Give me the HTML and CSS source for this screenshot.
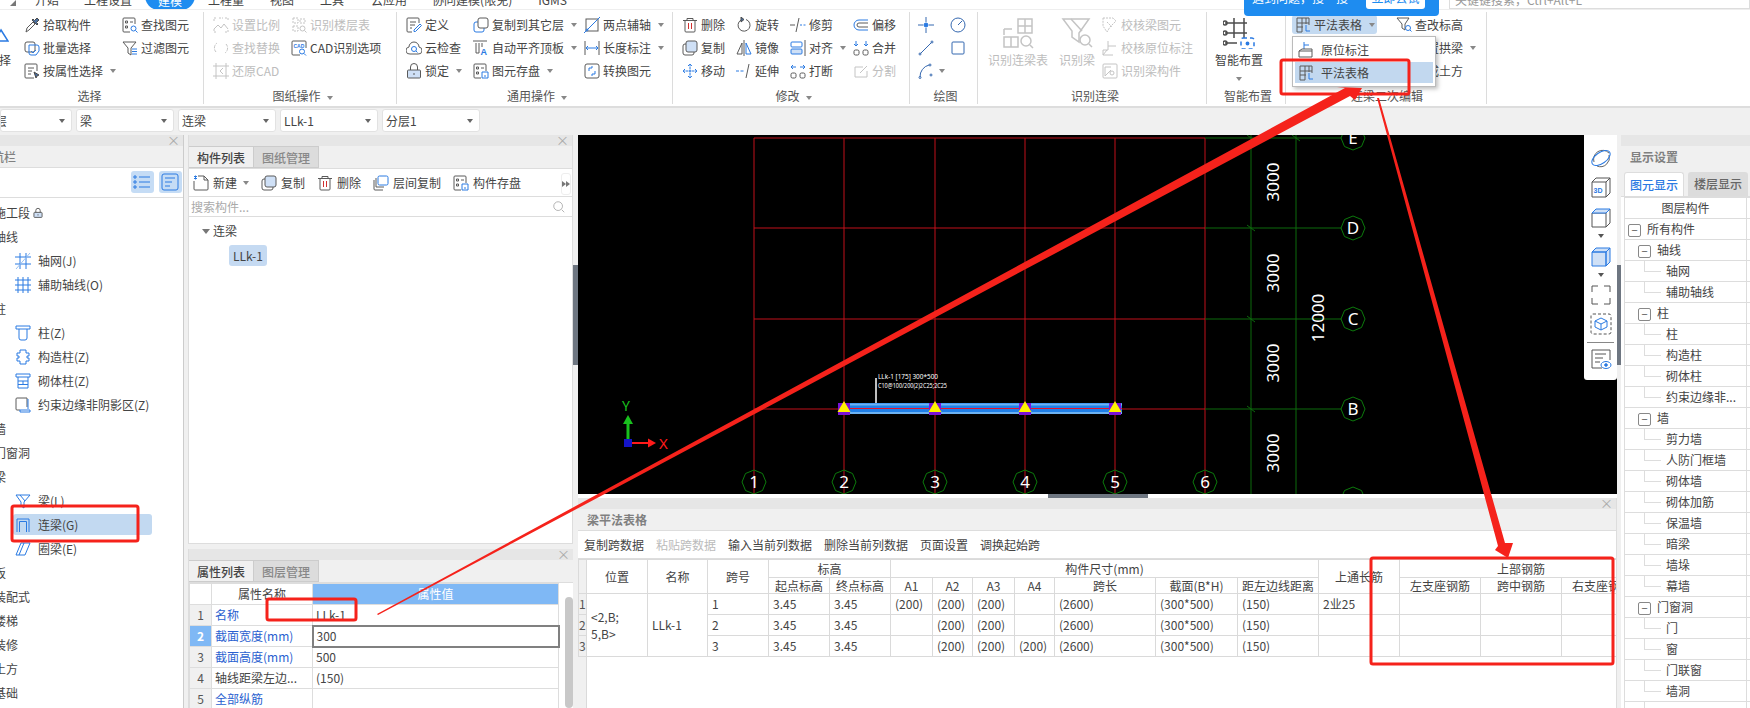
FILE: index.html
```html
<!DOCTYPE html>
<html lang="zh">
<head>
<meta charset="utf-8">
<title>梁平法表格</title>
<link rel="stylesheet" href="styles.css">
</head>
<body>
<svg class="defs" aria-hidden="true">
<defs>
<symbol id="i-pick" viewBox="0 0 16 16"><path d="M2 15l1-4 6-6 2 2-6 6z"/><path class="af" d="M8 3l5 5 1-1-1.500-1.500L15 3l-2-2-2.500 2.500L9 2z"/></symbol>
<symbol id="i-batch" viewBox="0 0 16 16"><rect x="1" y="2" width="10" height="10" rx="2"/><path class="a" d="M5 5h8a2 2 0 0 1 2 2v4l-3 4H7a2 2 0 0 1-2-2z"/><path class="a" d="M7 11l2 2 3-3"/></symbol>
<symbol id="i-attr" viewBox="0 0 16 16"><path d="M10 15H2a1 1 0 0 1-1-1V2a1 1 0 0 1 1-1h10a1 1 0 0 1 1 1v6"/><path d="M4 5h6M4 8h4M4 11h3"/><path class="af" d="M10 9l5 3-2 1-1 2z"/></symbol>
<symbol id="i-find" viewBox="0 0 16 16"><path d="M8 15H2a1 1 0 0 1-1-1V2a1 1 0 0 1 1-1h10a1 1 0 0 1 1 1v5"/><path d="M3.500 4h2v2h-2zM8 5h3M3.500 9h2v2h-2z"/><circle class="a" cx="11.500" cy="11.500" r="2.500"/><path class="a" d="M13.500 13.500l2 2"/></symbol>
<symbol id="i-filter" viewBox="0 0 16 16"><path d="M1 2h13l-5 6v7l-3-2V8z"/><path class="a" d="M10 9h5M10 11.500h5M10 14h5"/></symbol>
<symbol id="i-scale" viewBox="0 0 16 16"><path d="M1 4V1h3M12 1h3v3M1 12v3h3M12 15h3v-3M6 1h4" stroke-dasharray="2 1"/><path d="M1 12l4-4 3 3 3-4 4 5"/></symbol>
<symbol id="i-floor" viewBox="0 0 16 16"><path d="M2 1h5v5H2zM2 9h5v5H2zM9 2h5v4H9z" stroke-dasharray="2 1"/><circle cx="11.500" cy="11.500" r="2.500"/><path d="M13.500 13.500l2 2"/></symbol>
<symbol id="i-replace" viewBox="0 0 16 16"><path d="M3 12a6 6 0 0 1 1-9M13 4a6 6 0 0 1-1 9" stroke-dasharray="3 1"/></symbol>
<symbol id="i-cad" viewBox="0 0 16 16"><path d="M9 15H2a1 1 0 0 1-1-1V2a1 1 0 0 1 1-1h12a1 1 0 0 1 1 1v6"/><text x="2.500" y="7.500" class="tiny">CAD</text><circle class="a" cx="11" cy="11.500" r="2.500"/><path class="a" d="M13 13.500l2 2"/></symbol>
<symbol id="i-restore" viewBox="0 0 16 16"><path d="M3 0v16M13 0v16M0 3h16M0 13h16"/><path d="M10 5L7 8l3 3"/></symbol>
<symbol id="i-def" viewBox="0 0 16 16"><path d="M13 6V2a1 1 0 0 0-1-1H2a1 1 0 0 0-1 1v12a1 1 0 0 0 1 1h4"/><path d="M4 5h6M4 8h5M4 11h2"/><path class="a" d="M8 13l6-6 1.500 1.500-6 6H8z"/></symbol>
<symbol id="i-cloud" viewBox="0 0 16 16"><path d="M4 14a3.500 3.500 0 0 1-1-7 5 5 0 0 1 10 0 3.500 3.500 0 0 1-1 7z"/><circle class="a" cx="8" cy="9" r="2.500"/><path class="a" d="M10 11l1.500 1.500"/></symbol>
<symbol id="i-lock" viewBox="0 0 16 16"><rect class="lf" x="1.500" y="7" width="13" height="8" rx="1"/><path d="M4.500 7V4a3.500 3.500 0 0 1 7 0v3"/><path d="M8 10v2"/></symbol>
<symbol id="i-copy2" viewBox="0 0 16 16"><rect class="a" x="1" y="5" width="10" height="10" rx="2"/><rect x="5" y="1" width="10" height="10" rx="2" fill="#fff"/></symbol>
<symbol id="i-align" viewBox="0 0 16 16"><path d="M0 1h14M3 3v10h3V3M9 3v4"/><text x="7.500" y="15" class="tinyb">A</text></symbol>
<symbol id="i-save" viewBox="0 0 16 16"><path d="M8 15H2a1 1 0 0 1-1-1V2a1 1 0 0 1 1-1h10a1 1 0 0 1 1 1v6"/><path d="M3.500 4h2v2h-2zM8 5h3M3.500 9h2v2h-2z"/><path class="a" d="M9 9h6v6H9zM11 13h2"/></symbol>
<symbol id="i-two" viewBox="0 0 16 16"><rect x="2" y="2" width="12" height="12"/><path class="a" d="M0 16L16 0"/><circle class="a" cx="3" cy="13" r="1"/></symbol>
<symbol id="i-dim" viewBox="0 0 16 16"><path d="M1 1v14M15 1v14"/><path class="a" d="M2 8h12M4 6L2 8l2 2M12 6l2 2-2 2"/></symbol>
<symbol id="i-conv" viewBox="0 0 16 16"><rect x="1" y="1" width="14" height="14" rx="2"/><path class="a" d="M5 8V5h3M11 8v3H8M8 3v2M8 13v-2"/></symbol>
<symbol id="i-del" viewBox="0 0 16 16"><path d="M1 3.500h14M5 3V1.500h6V3M3 4v10a1 1 0 0 0 1 1h8a1 1 0 0 0 1-1V4"/><path class="r" d="M6.500 6v6M9.500 6v6"/></symbol>
<symbol id="i-rot" viewBox="0 0 16 16"><path d="M5 3a6 6 0 1 0 5-.5"/><path class="af" d="M5 0v5l3-2.500z"/></symbol>
<symbol id="i-trim" viewBox="0 0 16 16"><path d="M6 15L9 1"/><path d="M0 8h5"/><path class="a" d="M10 8h6" stroke-dasharray="2 1.500"/></symbol>
<symbol id="i-off" viewBox="0 0 16 16"><path class="a" d="M15 3H6a5 5 0 0 0 0 10h9"/><path d="M15 6H6a2 2 0 0 0 0 4h9"/></symbol>
<symbol id="i-copy" viewBox="0 0 16 16"><rect x="1" y="4" width="11" height="11" rx="2"/><rect class="lf" x="4" y="1" width="11" height="11" rx="2"/></symbol>
<symbol id="i-mir" viewBox="0 0 16 16"><path d="M8 0v16"/><path d="M6 3L1 14h5z"/><path class="a" d="M10 3l5 11h-5z"/></symbol>
<symbol id="i-al2" viewBox="0 0 16 16"><rect class="a" x="1" y="2" width="11" height="5" rx="1"/><rect class="alf" x="1" y="9" width="11" height="5" rx="1"/><path d="M15 0v16"/></symbol>
<symbol id="i-mrg" viewBox="0 0 16 16"><rect x="1" y="10" width="5" height="5" rx="1.500"/><rect x="10" y="10" width="5" height="5" rx="1.500"/><path class="a" d="M3 1v5M13 1v5M5 4h0M11 4h0M1 4l2 2 2-2M11 4l2 2 2-2"/></symbol>
<symbol id="i-mov" viewBox="0 0 16 16"><path class="a" d="M8 1v14M1 8h14M6 3l2-2 2 2M6 13l2 2 2-2M3 6L1 8l2 2M13 6l2 2-2 2" stroke-dasharray="2.500 .5"/></symbol>
<symbol id="i-ext" viewBox="0 0 16 16"><path d="M10 15l3-14"/><path class="a" d="M0 8h9" stroke-dasharray="3 1.500"/></symbol>
<symbol id="i-brk" viewBox="0 0 16 16"><rect x="1" y="10" width="5" height="5" rx="1.500"/><rect x="10" y="10" width="5" height="5" rx="1.500"/><path class="a" d="M1 4h5M10 4h5M3 2L1 4l2 2M13 2l2 2-2 2"/></symbol>
<symbol id="i-split" viewBox="0 0 16 16"><path d="M14 8v6H2V4h8"/><path d="M7 10l7-7"/></symbol>
<symbol id="i-pt" viewBox="0 0 16 16"><path class="c" d="M8 0v5M8 11v5M0 8h5M11 8h5"/><circle class="cf" cx="8" cy="8" r="2"/></symbol>
<symbol id="i-cir" viewBox="0 0 16 16"><circle class="c" cx="8" cy="8" r="7"/><path class="c" d="M8 8l4-4"/></symbol>
<symbol id="i-line" viewBox="0 0 16 16"><path class="c" d="M2.500 13.500l11-11"/><circle class="c" cx="2" cy="14" r="1"/><circle class="c" cx="14" cy="2" r="1"/></symbol>
<symbol id="i-rect" viewBox="0 0 16 16"><rect class="c" x="2" y="2" width="12" height="12" rx="1"/></symbol>
<symbol id="i-arc" viewBox="0 0 16 16"><path class="c" d="M2 14A12 12 0 0 1 11 2"/><circle class="c" cx="2" cy="14.500" r="1"/><circle class="c" cx="12" cy="2" r="1"/><circle class="c" cx="13" cy="12" r="1"/></symbol>
<symbol id="i-recog" viewBox="0 0 32 32"><path d="M2 12h8M2 12v6M16 2h14v14H16zM23 2v14M16 9h14M2 20h14v10H2zM9 20v10"/><circle cx="24" cy="24" r="5"/><path d="M28 28l3 3"/></symbol>
<symbol id="i-rbeam" viewBox="0 0 32 32"><path d="M2 2h26L18 16v9L11 20v-6z"/><path d="M10 2l11 12"/><circle cx="24" cy="23" r="5"/><path d="M28 27l3 3"/></symbol>
<symbol id="i-k1" viewBox="0 0 16 16"><path d="M1 1h10l3 3-6 6-3 5-4-6zM5 5l5 5" stroke-dasharray="2 1"/></symbol>
<symbol id="i-k2" viewBox="0 0 16 16"><path d="M6 1v9H1v5h10M6 6h8M1 15l4-5"/></symbol>
<symbol id="i-k3" viewBox="0 0 16 16"><rect x="1" y="1" width="14" height="14" rx="1"/><path d="M3 13V4h6M3 13l6-6"/><circle cx="10" cy="10" r="2"/></symbol>
<symbol id="i-smart" viewBox="0 0 32 32"><g class="sm"><path d="M11 1v20M21 1v20M2 6h22M2 16h22M2 26h12"/><circle cx="2" cy="6" r="2"/><circle cx="2" cy="16" r="2"/><circle cx="2" cy="26" r="2"/></g><rect class="ab" x="18" y="21" width="13" height="11" rx="2" stroke-dasharray="4 3"/><circle class="cf" cx="24.500" cy="26.500" r="1.200"/></symbol>
<symbol id="i-tbl" viewBox="0 0 16 16"><path d="M2 1h12v7M2 1v14h5M2 6h12M2 10h6M7 1v14M11 1v6"/><path class="ab" d="M11 8v6h4"/></symbol>
<symbol id="i-qh" viewBox="0 0 16 16"><path d="M1 1h12l-4 6v6l-3-2V7z"/><circle class="a" cx="12" cy="11" r="2.500"/><path class="a" d="M14 13l1.500 1.500"/></symbol>
<symbol id="i-orig" viewBox="0 0 16 16"><path class="ab" d="M6 0v7M6 3h5"/><path d="M1 9h13v6H1zM1 9l3-2h10v2"/></symbol>
<symbol id="i-grid" viewBox="0 0 16 16"><path class="ab" d="M5 0v16M11 0v16M0 4h16M0 11h16"/><path d="M1 16L15 0" stroke="#9ac1f0"/></symbol>
<symbol id="i-grid2" viewBox="0 0 16 16"><path class="ab" d="M3 0v16M8 0v16M13 0v16M0 3h16M0 8h16M0 13h16"/></symbol>
<symbol id="i-col" viewBox="0 0 16 16"><path class="ab" d="M1 1h14v3H1zM4 4v9a2 2 0 0 0 2 2h4a2 2 0 0 0 2-2V4"/></symbol>
<symbol id="i-col2" viewBox="0 0 16 16"><path class="ab" d="M5 1h6v3h3v3h-2v2h2v3h-3v3H5v-3H2V9h2V7H2V4h3z"/></symbol>
<symbol id="i-col3" viewBox="0 0 16 16"><path class="ab" d="M1 1h14v3H1zM3 4v11h10V4M3 8h10M3 11.500h10M8 8v3.500"/></symbol>
<symbol id="i-edge" viewBox="0 0 16 16"><path d="M12 10V1H2a1 1 0 0 0-1 1v10a1 1 0 0 0 1 1h3"/><path class="ab" d="M13 2v10M5 13h10v2H5z"/></symbol>
<symbol id="i-bm" viewBox="0 0 16 16"><path class="ab" d="M1 2h14L9 9v6l-3-2V9zM5 2l5 6"/></symbol>
<symbol id="i-ll" viewBox="0 0 16 16"><path class="ab" d="M2 15V2h12v13M4.500 15V4.500h7V15"/></symbol>
<symbol id="i-ring" viewBox="0 0 16 16"><path class="ab" d="M1 14L6 2h9l-5 12zM4 14l5-12"/></symbol>
<symbol id="i-new" viewBox="0 0 16 16"><path d="M5 1h6l4 4v9a1 1 0 0 1-1 1H2a1 1 0 0 1-1-1V6M11 1v4h4"/><path class="a" d="M1 1l3 3M4 1L1 4M2.500 .5v4"/></symbol>
<symbol id="i-lay" viewBox="0 0 16 16"><path d="M1 5v9a1 1 0 0 0 1 1h8M3 3v9h8"/><rect class="a" x="5" y="1" width="10" height="9" rx="1.500"/></symbol>
<symbol id="i-list" viewBox="0 0 18 18"><g class="ab"><path d="M6 4h11M6 9h11M6 14h11"/><path d="M1 3h2v2H1zM1 8h2v2H1zM1 13h2v2H1z"/></g></symbol>
<symbol id="i-frm" viewBox="0 0 18 18"><g class="ab"><rect x="1" y="1" width="16" height="16" rx="2"/><path d="M4 5h10M4 9h7M4 13h5"/></g></symbol>
<symbol id="i-sph" viewBox="0 0 22 22"><path d="M4 15A9 9 0 0 1 19 6" stroke="#666"/><path d="M19 8a9 9 0 0 1-12 11" stroke="#666"/><ellipse class="ab" cx="11" cy="11" rx="10.500" ry="5.500" transform="rotate(-35 11 11)"/></symbol>
<symbol id="i-3d" viewBox="0 0 22 22"><path d="M2 6h14v15H2zM2 6l4-4h14v15l-4 4M16 6l4-4"/><text x="3.500" y="17" class="d3">3D</text></symbol>
<symbol id="i-cb" viewBox="0 0 22 22"><path d="M2 7h14v14H2zM16 7l4-4v14l-4 4"/><path class="ab lf" d="M2 7l4-4h14l-4 4z"/></symbol>
<symbol id="i-cb2" viewBox="0 0 22 22"><path class="ab lf" d="M2 7h14v14H2zM2 7l4-4h14l-4 4zM16 7l4-4v14l-4 4z"/></symbol>
<symbol id="i-ds" viewBox="0 0 22 22"><path d="M2 8V2h6M14 2h6v6M2 14v6h6M14 20h6v-6"/></symbol>
<symbol id="i-dc" viewBox="0 0 22 22"><rect x="1" y="1" width="20" height="20" rx="2" stroke-dasharray="3 2"/><path class="ab" d="M11 5l6 3v6l-6 3-6-3V8zM5 8l6 3 6-3M11 11v6"/></symbol>
<symbol id="i-le" viewBox="0 0 22 22"><path d="M12 20H2V2h18v10"/><path d="M5 6h11M5 10h8M5 14h5"/><ellipse class="ab" cx="16" cy="17" rx="5" ry="3.500"/><circle class="cf" cx="16" cy="17" r="1.300"/></symbol>
<polygon id="oct" points="12,0 8.500,8.500 0,12 -8.500,8.500 -12,0 -8.500,-8.500 0,-12 8.500,-8.500" class="bubble"/>
</defs>
</svg>

<div class="tabs">
  <i class="tab-mark"></i>
  <span class="tab t-a">开始</span>
  <span class="tab t-b">工程设置</span>
  <span class="tab tab-on">建模</span>
  <span class="tab t-c">工程量</span>
  <span class="tab t-d">视图</span>
  <span class="tab t-e">工具</span>
  <span class="tab t-f">云应用</span>
  <span class="tab t-g">协同建模(限免)</span>
  <span class="tab t-h">IGMS</span>
  <span class="quick">关键键搜索，Ctrl+Alt+L</span>
</div>
<div class="tip"><span class="tip-t">遇到问题，搜一搜</span><span class="tip-btn"><span class="tip-bt">立即去试</span></span></div>

<div class="ribbon">
  <section class="g g1">
    <div class="gb">
      <div class="big b-sel"><svg class="ic tri" viewBox="0 0 16 16"><path d="M1 14L8 3l7 11z"/></svg><span>选择</span></div>
      <div class="c w98">
        <div class="ri"><svg class="ic"><use href="#i-pick"/></svg>拾取构件</div>
        <div class="ri"><svg class="ic"><use href="#i-batch"/></svg>批量选择</div>
        <div class="ri"><svg class="ic"><use href="#i-attr"/></svg>按属性选择<i class="arr"></i></div>
      </div>
      <div class="c">
        <div class="ri"><svg class="ic"><use href="#i-find"/></svg>查找图元</div>
        <div class="ri"><svg class="ic"><use href="#i-filter"/></svg>过滤图元</div>
      </div>
    </div>
    <div class="gl">选择</div>
  </section>
  <section class="g g2">
    <div class="gb">
      <div class="c w78 dis">
        <div class="ri"><svg class="ic"><use href="#i-scale"/></svg>设置比例</div>
        <div class="ri"><svg class="ic"><use href="#i-replace"/></svg>查找替换</div>
        <div class="ri"><svg class="ic"><use href="#i-restore"/></svg>还原CAD</div>
      </div>
      <div class="c">
        <div class="ri dis"><svg class="ic"><use href="#i-floor"/></svg>识别楼层表</div>
        <div class="ri"><svg class="ic"><use href="#i-cad"/></svg>CAD识别选项</div>
      </div>
    </div>
    <div class="gl">图纸操作<i class="arr arr-l"></i></div>
  </section>
  <section class="g g3">
    <div class="gb">
      <div class="c w67">
        <div class="ri"><svg class="ic"><use href="#i-def"/></svg>定义</div>
        <div class="ri"><svg class="ic"><use href="#i-cloud"/></svg>云检查</div>
        <div class="ri"><svg class="ic"><use href="#i-lock"/></svg>锁定<i class="arr"></i></div>
      </div>
      <div class="c w111">
        <div class="ri"><svg class="ic"><use href="#i-copy2"/></svg>复制到其它层<i class="arr"></i></div>
        <div class="ri"><svg class="ic"><use href="#i-align"/></svg>自动平齐顶板<i class="arr"></i></div>
        <div class="ri"><svg class="ic"><use href="#i-save"/></svg>图元存盘<i class="arr"></i></div>
      </div>
      <div class="c">
        <div class="ri"><svg class="ic"><use href="#i-two"/></svg>两点辅轴<i class="arr"></i></div>
        <div class="ri"><svg class="ic"><use href="#i-dim"/></svg>长度标注<i class="arr"></i></div>
        <div class="ri"><svg class="ic"><use href="#i-conv"/></svg>转换图元</div>
      </div>
    </div>
    <div class="gl">通用操作<i class="arr arr-l"></i></div>
  </section>
  <section class="g g4">
    <div class="gb">
      <div class="c w54">
        <div class="ri"><svg class="ic"><use href="#i-del"/></svg>删除</div>
        <div class="ri"><svg class="ic"><use href="#i-copy"/></svg>复制</div>
        <div class="ri"><svg class="ic"><use href="#i-mov"/></svg>移动</div>
      </div>
      <div class="c w54">
        <div class="ri"><svg class="ic"><use href="#i-rot"/></svg>旋转</div>
        <div class="ri"><svg class="ic"><use href="#i-mir"/></svg>镜像</div>
        <div class="ri"><svg class="ic"><use href="#i-ext"/></svg>延伸</div>
      </div>
      <div class="c w63">
        <div class="ri"><svg class="ic"><use href="#i-trim"/></svg>修剪</div>
        <div class="ri"><svg class="ic"><use href="#i-al2"/></svg>对齐<i class="arr"></i></div>
        <div class="ri"><svg class="ic"><use href="#i-brk"/></svg>打断</div>
      </div>
      <div class="c">
        <div class="ri"><svg class="ic"><use href="#i-off"/></svg>偏移</div>
        <div class="ri"><svg class="ic"><use href="#i-mrg"/></svg>合并</div>
        <div class="ri dis"><svg class="ic"><use href="#i-split"/></svg>分割</div>
      </div>
    </div>
    <div class="gl">修改<i class="arr arr-l"></i></div>
  </section>
  <section class="g g5">
    <div class="gb">
      <div class="c w32">
        <div class="ri"><svg class="ic"><use href="#i-pt"/></svg></div>
        <div class="ri"><svg class="ic"><use href="#i-line"/></svg></div>
        <div class="ri"><svg class="ic"><use href="#i-arc"/></svg><i class="arr arr-n"></i></div>
      </div>
      <div class="c">
        <div class="ri"><svg class="ic"><use href="#i-cir"/></svg></div>
        <div class="ri"><svg class="ic"><use href="#i-rect"/></svg></div>
      </div>
    </div>
    <div class="gl">绘图</div>
  </section>
  <section class="g g6">
    <div class="gb">
      <div class="big dis w71"><svg class="bic"><use href="#i-recog"/></svg><span>识别连梁表</span></div>
      <div class="big dis w43"><svg class="bic"><use href="#i-rbeam"/></svg><span>识别梁</span></div>
      <div class="c dis">
        <div class="ri"><svg class="ic"><use href="#i-k1"/></svg>校核梁图元</div>
        <div class="ri"><svg class="ic"><use href="#i-k2"/></svg>校核原位标注</div>
        <div class="ri"><svg class="ic"><use href="#i-k3"/></svg>识别梁构件</div>
      </div>
    </div>
    <div class="gl">识别连梁</div>
  </section>
  <section class="g g7">
    <div class="gb">
      <div class="big w48"><svg class="bic"><use href="#i-smart"/></svg><span>智能布置</span><i class="arr arr-b"></i></div>
    </div>
    <div class="gl">智能布置</div>
  </section>
  <section class="g g-edit">
    <div class="gb">
      <div class="c w104">
        <div class="ri ri-on"><svg class="ic"><use href="#i-tbl"/></svg>平法表格<i class="arr"></i></div>
      </div>
      <div class="c">
        <div class="ri"><svg class="ic"><use href="#i-qh"/></svg>查改标高</div>
        <div class="ri"><svg class="ic"><use href="#i-bm"/></svg>布置拱梁<i class="arr"></i></div>
        <div class="ri"><svg class="ic"><use href="#i-conv"/></svg>生成土方</div>
      </div>
    </div>
    <div class="gl">连梁二次编辑</div>
    <div class="menu">
      <div class="mi"><svg class="ic"><use href="#i-orig"/></svg>原位标注</div>
      <div class="mi mi-on"><svg class="ic"><use href="#i-tbl"/></svg>平法表格</div>
    </div>
  </section>
</div>

<div class="combos">
  <span class="combo cb-first">层</span>
  <span class="combo">梁</span>
  <span class="combo">连梁</span>
  <span class="combo">LLk-1</span>
  <span class="combo">分层1</span>
</div>

<main class="main">
  <aside class="nav">
    <div class="strip"><span class="x">×</span></div>
    <div class="title title-nav">导航栏</div>
    <div class="nav-tools">
      <span class="tool-on"><svg class="tic"><use href="#i-list"/></svg></span>
      <span class="tool-on"><svg class="tic"><use href="#i-frm"/></svg></span>
    </div>
    <ul class="nlist">
      <li class="ng">施工段<svg class="ic nlock"><use href="#i-lock"/></svg></li>
      <li class="ng">轴线</li>
      <li class="ni"><svg class="ic"><use href="#i-grid"/></svg>轴网(J)</li>
      <li class="ni"><svg class="ic"><use href="#i-grid2"/></svg>辅助轴线(O)</li>
      <li class="ng">柱</li>
      <li class="ni"><svg class="ic"><use href="#i-col"/></svg>柱(Z)</li>
      <li class="ni"><svg class="ic"><use href="#i-col2"/></svg>构造柱(Z)</li>
      <li class="ni"><svg class="ic"><use href="#i-col3"/></svg>砌体柱(Z)</li>
      <li class="ni"><svg class="ic"><use href="#i-edge"/></svg>约束边缘非阴影区(Z)</li>
      <li class="ng">墙</li>
      <li class="ng">门窗洞</li>
      <li class="ng">梁</li>
      <li class="ni"><svg class="ic"><use href="#i-bm"/></svg>梁(L)</li>
      <li class="ni ni-on"><svg class="ic"><use href="#i-ll"/></svg>连梁(G)</li>
      <li class="ni"><svg class="ic"><use href="#i-ring"/></svg>圈梁(E)</li>
      <li class="ng">板</li>
      <li class="ng">装配式</li>
      <li class="ng">楼梯</li>
      <li class="ng">装修</li>
      <li class="ng">土方</li>
      <li class="ng">基础</li>
    </ul>
  </aside>

  <div class="midcol">
    <section class="mid-top">
      <div class="strip"><span class="x">×</span></div>
      <div class="ptabs"><span class="ptab ptab-on">构件列表</span><span class="ptab">图纸管理</span></div>
      <div class="mtools">
        <span class="mt mt-new"><svg class="ic"><use href="#i-new"/></svg>新建<i class="arr"></i></span>
        <span class="mt"><svg class="ic"><use href="#i-copy"/></svg>复制</span>
        <span class="mt"><svg class="ic"><use href="#i-del"/></svg>删除</span>
        <span class="mt"><svg class="ic"><use href="#i-lay"/></svg>层间复制</span>
        <span class="mt"><svg class="ic"><use href="#i-save"/></svg>构件存盘</span>
        <span class="more"><i class="mo"></i><i class="mo"></i></span>
      </div>
      <div class="search"><span>搜索构件...</span><svg class="ic sic" viewBox="0 0 16 16"><circle cx="7" cy="7" r="5"/><path d="M11 11l3 3"/></svg></div>
      <div class="tree-h"><i class="caret"></i>连梁</div>
      <div class="tree-i"><span>LLk-1</span></div>
    </section>
    <section class="mid-bot">
      <div class="strip"><span class="x">×</span></div>
      <div class="ptabs"><span class="ptab ptab-on">属性列表</span><span class="ptab">图层管理</span></div>
      <div class="prop-wrap">
        <table class="prop">
          <colgroup><col class="pc1"><col class="pc2"><col class="pc3"></colgroup>
          <tr class="ph"><th></th><th>属性名称</th><th class="pv">属性值</th></tr>
          <tr><td class="pn">1</td><td class="blue">名称</td><td>LLk-1</td></tr>
          <tr><td class="pn pn-on">2</td><td class="blue">截面宽度(mm)</td><td class="edit">300</td></tr>
          <tr><td class="pn">3</td><td class="blue">截面高度(mm)</td><td>500</td></tr>
          <tr><td class="pn">4</td><td>轴线距梁左边...</td><td>(150)</td></tr>
          <tr><td class="pn">5</td><td class="blue">全部纵筋</td><td></td></tr>
        </table>
        <div class="vbar"></div>
      </div>
    </section>
  </div>

  <div class="split split-l"></div>

  <div class="centercol">
    <div class="canvas">
      <svg class="cad" viewBox="578 135 1039 359" width="1039" height="359">
        <g class="rl">
          <path d="M754 138H1205M754 228H1205M754 319H1205M754 409H1205"/>
          <path d="M754 138V494M844 138V494M935 138V494M1025 138V494M1115 138V494M1205 138V494"/>
        </g>
        <g class="gl-line">
          <path d="M1205 138H1341M1205 228H1341M1205 319H1341M1205 409H1341M1251 135V494M1296 135V494"/>
          <path d="M1247 135l8 6M1292 135l8 6M1247 225l8 6M1247 316l8 6M1247 406l8 6"/>
        </g>
        <use href="#oct" x="1353" y="138"/><use href="#oct" x="1353" y="228"/><use href="#oct" x="1353" y="319"/><use href="#oct" x="1353" y="409"/><use href="#oct" x="1353" y="499"/>
        <use href="#oct" x="754" y="482"/><use href="#oct" x="844" y="482"/><use href="#oct" x="935" y="482"/><use href="#oct" x="1025" y="482"/><use href="#oct" x="1115" y="482"/><use href="#oct" x="1205" y="482"/>
        <g class="bt">
          <text x="1353" y="144">E</text><text x="1353" y="234">D</text><text x="1353" y="325">C</text><text x="1353" y="415">B</text>
          <text x="754" y="488">1</text><text x="844" y="488">2</text><text x="935" y="488">3</text><text x="1025" y="488">4</text><text x="1115" y="488">5</text><text x="1205" y="488">6</text>
        </g>
        <g class="dimt">
          <text transform="translate(1279 182) rotate(-90)">3000</text>
          <text transform="translate(1279 273) rotate(-90)">3000</text>
          <text transform="translate(1279 363) rotate(-90)">3000</text>
          <text transform="translate(1279 453) rotate(-90)">3000</text>
          <text transform="translate(1324 318) rotate(-90)">12000</text>
        </g>
        <rect x="838" y="403" width="284" height="11" fill="#1f7fe8"/>
        <rect x="838" y="403.500" width="284" height="2" fill="#6db2f2"/>
        <rect x="838" y="412" width="284" height="2" fill="#6db2f2"/>
        <path d="M838 408.500H1122" stroke="#e8102a" fill="none"/>
        <path d="M876 403V378" stroke="#fff" fill="none" stroke-width="1.500"/>
        <text x="878" y="379" class="mini" textLength="60" lengthAdjust="spacingAndGlyphs">LLk-1 [175] 300*500</text>
        <text x="878" y="388" class="mini" textLength="69" lengthAdjust="spacingAndGlyphs">C10@100/200(2)2C25;2C25</text>
        <g fill="#7a12d8"><rect x="838" y="403" width="12" height="12"/><rect x="929" y="403" width="12" height="12"/><rect x="1019" y="403" width="12" height="12"/><rect x="1109" y="403" width="12" height="12"/></g>
        <g fill="#fff200"><path d="M844 401l6.500 11h-13z"/><path d="M935 401l6.500 11h-13z"/><path d="M1025 401l6.500 11h-13z"/><path d="M1115 401l6.500 11h-13z"/></g>
        <path d="M628 440V422" stroke="#19c01e" stroke-width="3" fill="none"/><path d="M628 415l5 9h-10z" fill="#19c01e"/>
        <path d="M631 443h20" stroke="#ff1a1a" stroke-width="2" fill="none"/><path d="M656 443l-8-4.500v9z" fill="#ff1a1a"/>
        <rect x="624" y="439" width="8" height="8" fill="#1414c8"/>
        <text x="622" y="411" class="ucs-y">Y</text><text x="659" y="449" class="ucs-x">X</text>
      </svg>
      <div class="vtools">
        <svg class="vic"><use href="#i-sph"/></svg>
        <svg class="vic"><use href="#i-3d"/></svg>
        <svg class="vic"><use href="#i-cb"/></svg>
        <i class="arr vtarr"></i>
        <svg class="vic"><use href="#i-cb2"/></svg>
        <i class="arr vtarr"></i>
        <svg class="vic"><use href="#i-ds"/></svg>
        <svg class="vic"><use href="#i-dc"/></svg>
        <hr class="vline">
        <svg class="vic"><use href="#i-le"/></svg>
      </div>
    </div>
    <div class="grip"><span></span></div>
    <section class="bottom">
      <div class="strip"><span class="x">×</span></div>
      <div class="title title-b">梁平法表格</div>
      <div class="btools">
        <span>复制跨数据</span><span class="off">粘贴跨数据</span><span>输入当前列数据</span><span>删除当前列数据</span><span>页面设置</span><span>调换起始跨</span>
      </div>
      <div class="gridwrap">
        <table class="grid">
          <colgroup>
            <col class="k8"><col class="k61"><col class="k60"><col class="k61"><col class="k61"><col class="k61"><col class="k42"><col class="k40"><col class="k42"><col class="k40"><col class="k101"><col class="k82"><col class="k81"><col class="k81"><col class="k81"><col class="k81"><col class="k81">
          </colgroup>
          <tr class="h1"><th class="gut" rowspan="2"></th><th rowspan="2">位置</th><th rowspan="2">名称</th><th rowspan="2">跨号</th><th colspan="2">标高</th><th colspan="7">构件尺寸(mm)</th><th rowspan="2">上通长筋</th><th colspan="3">上部钢筋</th></tr>
          <tr class="h2"><th>起点标高</th><th>终点标高</th><th>A1</th><th>A2</th><th>A3</th><th>A4</th><th>跨长</th><th>截面(B*H)</th><th>距左边线距离</th><th>左支座钢筋</th><th>跨中钢筋</th><th>右支座钢筋</th></tr>
          <tr><td class="gut">1</td><td rowspan="3" class="pos">&lt;2,B;<br>5,B&gt;</td><td rowspan="3">LLk-1</td><td>1</td><td>3.45</td><td>3.45</td><td>(200)</td><td>(200)</td><td>(200)</td><td></td><td>(2600)</td><td>(300*500)</td><td>(150)</td><td>2业25</td><td></td><td></td><td></td></tr>
          <tr><td class="gut">2</td><td>2</td><td>3.45</td><td>3.45</td><td></td><td>(200)</td><td>(200)</td><td></td><td>(2600)</td><td>(300*500)</td><td>(150)</td><td></td><td></td><td></td><td></td></tr>
          <tr><td class="gut">3</td><td>3</td><td>3.45</td><td>3.45</td><td></td><td>(200)</td><td>(200)</td><td>(200)</td><td>(2600)</td><td>(300*500)</td><td>(150)</td><td></td><td></td><td></td><td></td></tr>
        </table>
        <div class="gutter"></div>
      </div>
    </section>
  </div>

  <div class="split split-r"></div>

  <aside class="right">
    <div class="strip"></div>
    <div class="title title-r">显示设置</div>
    <div class="rtabs"><span class="rtab rtab-on">图元显示</span><span class="rtab">楼层显示</span></div>
    <table class="layers">
      <tr class="lh"><th>图层构件</th><td></td></tr>
      <tr><th class="t0"><b class="bx">−</b>所有构件</th><td></td></tr>
      <tr><th class="t1"><b class="bx">−</b>轴线</th><td></td></tr>
      <tr><th class="t2 first">轴网</th><td></td></tr>
      <tr><th class="t2">辅助轴线</th><td></td></tr>
      <tr><th class="t1"><b class="bx">−</b>柱</th><td></td></tr>
      <tr><th class="t2 first">柱</th><td></td></tr>
      <tr><th class="t2">构造柱</th><td></td></tr>
      <tr><th class="t2">砌体柱</th><td></td></tr>
      <tr><th class="t2">约束边缘非...</th><td></td></tr>
      <tr><th class="t1"><b class="bx">−</b>墙</th><td></td></tr>
      <tr><th class="t2 first">剪力墙</th><td></td></tr>
      <tr><th class="t2">人防门框墙</th><td></td></tr>
      <tr><th class="t2">砌体墙</th><td></td></tr>
      <tr><th class="t2">砌体加筋</th><td></td></tr>
      <tr><th class="t2">保温墙</th><td></td></tr>
      <tr><th class="t2">暗梁</th><td></td></tr>
      <tr><th class="t2">墙垛</th><td></td></tr>
      <tr><th class="t2">幕墙</th><td></td></tr>
      <tr><th class="t1"><b class="bx">−</b>门窗洞</th><td></td></tr>
      <tr><th class="t2 first">门</th><td></td></tr>
      <tr><th class="t2">窗</th><td></td></tr>
      <tr><th class="t2">门联窗</th><td></td></tr>
      <tr><th class="t2">墙洞</th><td></td></tr>
      <tr><th class="t2"></th><td></td></tr>
    </table>
  </aside>
</main>

<svg class="marks" viewBox="0 0 1750 708" width="1750" height="708" aria-hidden="true">
  <g class="mark-box">
    <rect x="1281" y="60" width="128" height="34" rx="2"/>
    <rect x="12" y="506" width="126" height="35" rx="2"/>
    <rect x="267" y="599" width="89" height="21" rx="2"/>
    <rect x="1371" y="558" width="242" height="106" rx="2"/>
  </g>
  <polygon class="mark-arrow" points="377,614 1345,88 1337,87 1362,88 1355,100 1350,96 378,615"/>
  <polygon class="mark-arrow" points="1377,98 1379,98 1505,543 1513,543 1508,558 1495,550 1498,546"/>
</svg>
</body>
</html>
```
FILE: styles.css
```css
* { box-sizing: border-box; }
html, body { margin: 0; padding: 0; }
body {
  position: relative;
  width: 1750px;
  height: 708px;
  overflow: hidden;
  background: #f0f0f0;
  color: #444;
  font: 12px/16px "Noto Sans CJK SC", "Noto Sans", sans-serif;
  --acc: #2a7ae2;
}
.defs { position: absolute; width: 0; height: 0; }

/* icon strokes */
.ic, .bic, .tic, .vic { fill: none; stroke: #5a5a5a; stroke-width: 1; flex: none; display: block; }
.ic { width: 16px; height: 16px; }
.bic { width: 32px; height: 32px; stroke: #4c4c4c; stroke-width: 1.500; }
.tic { width: 18px; height: 18px; }
.vic { width: 22px; height: 22px; }
.a { stroke: var(--acc); }
.af { fill: #4a6fa0; stroke: #4a4a4a; }
.ab { stroke: #2a7ae2; }
.lf { fill: #cfe0f6; }
.alf { fill: #cfe0f6; stroke: var(--acc); }
.r { stroke: #d03030; }
.c { stroke: #3568b0; }
.cf { fill: #2a7ae2; stroke: #2a7ae2; }
.sm { stroke: #4c4c4c; }
.tiny { font: 700 5px "Liberation Sans", sans-serif; fill: var(--acc); stroke: none; }
.tinyb { font: 700 9px "Liberation Sans", sans-serif; fill: var(--acc); stroke: none; }
.d3 { font: 700 7px "Liberation Sans", sans-serif; fill: #2a7ae2; stroke: none; }
.dis { color: #bdbdbd; --acc: #c4c4c4; }
.dis .ic, .dis .bic { stroke: #c4c4c4; }
.dis .sm { stroke: #c4c4c4; }

/* tabs */
.tabs {
  height: 10px;
  background: #fff;
  border-bottom: 1px solid #eee;
  display: flex;
  overflow: hidden;
  line-height: 14px;
  color: #444;
  position: relative;
}
.tab { margin-top: -7px; height: 15px; white-space: nowrap; flex: none; }
.tab-mark { flex: none; width: 0; height: 0; margin: 0 0 0 10px; border: 3px solid transparent; border-right-color: #777; border-bottom-color: #777; }
.t-a { margin-left: 19px; }
.t-b { margin-left: 25px; }
.tab-on { margin-left: 13px; width: 50px; height: 18px; margin-top: -8px; line-height: 18px; text-align: center; background: #1e8cf0; color: #fff; border-radius: 0 0 14px 14px; }
.t-c { margin-left: 13px; }
.t-d { margin-left: 26px; }
.t-e { margin-left: 26px; }
.t-f { margin-left: 27px; }
.t-g { margin-left: 25px; }
.t-h { margin-left: 26px; }
.quick { position: absolute; left: 1449px; top: 0; width: 301px; height: 9px; border: 1px solid #ddd; border-top: 0; padding-left: 5px; color: #999; margin-top: 0; line-height: 0; font-size: 12px; }
.tip { position: absolute; left: 1244px; top: 0; width: 195px; height: 16px; padding-left: 8px; background: #1e8cf0; color: #fff; border-radius: 0 0 4px 4px; line-height: 0; white-space: nowrap; overflow: hidden; z-index: 4; }
.tip-t { display: block; margin-top: -2px; }
.tip-btn { position: absolute; left: 122px; top: 0; width: 59px; height: 9px; background: #fff; color: #1e8cf0; text-align: center; border-radius: 0 0 3px 3px; }
.tip-bt { display: block; margin-top: -2px; }

/* ribbon */
.ribbon { display: flex; height: 98px; background: #fff; border-bottom: 2px solid #ddd; }
.g { position: relative; margin-top: 2px; height: 92px; border-right: 1px solid #dcdcdc; flex: none; display: flex; flex-direction: column; }
.g1 { margin-left: -24px; width: 228px; }
.g2 { width: 193px; padding-left: 9px; }
.g3 { width: 276px; padding-left: 9px; }
.g4 { width: 237px; padding-left: 9px; }
.g5 { width: 68px; padding-left: 8px; }
.g6 { width: 229px; padding-left: 10px; }
.g7 { width: 79px; padding-left: 8px; }
.g-edit { width: 201px; padding-left: 6px; }
.gb { height: 72px; padding-top: 1px; display: flex; flex: none; }
.gl { height: 20px; padding-top: 2px; line-height: 20px; text-align: center; color: #555; flex: none; white-space: nowrap; margin-left: -4px; }
.g1 .gl { margin-left: 0; }
.c { display: flex; flex-direction: column; flex: none; }
.w32 { width: 32px; } .w43 { width: 43px; } .w48 { width: 48px; } .w54 { width: 54px; } .w63 { width: 63px; } .w67 { width: 67px; }
.w71 { width: 71px; } .w78 { width: 78px; } .w98 { width: 98px; } .w104 { width: 104px; } .w111 { width: 111px; }
.ri { height: 23px; display: flex; align-items: center; gap: 3px; white-space: nowrap; color: #444; }
.ri.dis, .dis .ri { color: #bdbdbd; }
.arr { display: inline-block; flex: none; width: 0; height: 0; border: 3.500px solid transparent; border-top: 4px solid #888; border-bottom: 0; margin-left: 4px; }
.arr-l { margin-left: 6px; vertical-align: middle; }
.arr-n { margin-left: 2px; }
.arr-b { margin-left: 0; margin-top: 7px; }
.big { display: flex; flex-direction: column; align-items: flex-start; white-space: nowrap; }
.big .bic { margin: 4px 0 0 14px; height: 32px; }
.big span { line-height: 20px; margin-top: 1px; }
.w48 { align-items: center; }
.w48 .bic { margin-left: 0; }
.w43 .bic { margin-left: 2px; }
.b-sel { width: 24px; margin: 0 13px 0 11px; padding-top: 37px; }
.tri { position: absolute; left: 17px; top: 15px; stroke: #2a7ae2; stroke-width: 1.500; }
.b-sel span { margin: 0; }
.ri-on { width: 85px; height: 19px; margin-top: 2px; margin-bottom: 2px; padding-left: 3px; background: #c4daf1; border-radius: 3px; }
.menu { position: absolute; left: 6px; top: 24px; width: 144px; height: 51px; background: #fff; border: 1px solid #bbb; box-shadow: 2px 2px 4px rgba(0,0,0,.25); padding: 2px; z-index: 3; }
.mi { height: 22px; display: flex; align-items: center; gap: 7px; padding-left: 3px; color: #444; }
.mi-on { background: #c2d8ef; height: 21px; margin-top: 1px; }

/* combos */
.combos { height: 27px; display: flex; gap: 4px; padding-top: 1px; }
.combo { position: relative; width: 98px; height: 23px; margin-top: 0; background: #fff; border-radius: 3px; border: 1px solid #e2e2e2; padding-left: 3px; line-height: 21px; color: #444; }
.combo::after { content: ""; position: absolute; right: 6px; top: 9px; border: 3.500px solid transparent; border-top: 4px solid #666; border-bottom: 0; }
.cb-first { width: 72px; margin-left: 0; padding-left: 0; text-indent: -6px; overflow: hidden; }

/* main */
.main { height: 573px; display: flex; }
.strip { position: relative; height: 11px; background: #e6e6e6; flex: none; }
.x { position: absolute; right: 3px; top: -3px; color: #aaa; font-size: 13px; line-height: 16px; }
.title { height: 22px; background: #f0f0f0; border-bottom: 1px solid #ddd; font-weight: 500; color: #808080; line-height: 22px; flex: none; }
.nav { width: 184px; flex: none; background: #fff; border-right: 1px solid #ccc; overflow: hidden; }
.title-nav { padding-left: 0; text-indent: -20px; }
.nav-tools { height: 30px; display: flex; justify-content: flex-end; gap: 5px; padding: 3px 1px 0 0; border-bottom: 1px solid #ddd; }
.tool-on { width: 23px; height: 22px; padding: 2px; background: #c5dcf5; border-radius: 3px; }
.nlist { list-style: none; margin: 0; padding: 3px 0 0; }
.ng, .ni { height: 24px; line-height: 24px; white-space: nowrap; color: #444; }
.ng { display: flex; align-items: center; margin-left: -6px; }
.nlock { width: 10px; height: 12px; margin-left: 3px; stroke-width: 1.500; }
.ni { display: flex; align-items: center; gap: 7px; padding-left: 15px; }
.ni-on { margin-left: 13px; padding-left: 2px; width: 139px; background: #c2d9f1; border-radius: 3px; height: 21px; margin-top: 1px; margin-bottom: 2px; line-height: 21px; }

.midcol { width: 385px; margin-left: 4px; flex: none; display: flex; flex-direction: column; gap: 5px; }
.mid-top { height: 409px; background: #fff; border: 1px solid #ddd; border-top: 0; display: flex; flex-direction: column; }
.mid-bot { height: 159px; background: #fff; display: flex; flex-direction: column; overflow: hidden; border-left: 1px solid #ddd; }
.ptabs { height: 23px; background: #f0f0f0; border-bottom: 1px solid #ddd; display: flex; flex: none; }
.ptab { width: 65px; text-align: center; line-height: 22px; background: #dcdcdc; color: #888; border: 1px solid #ccc; border-left: 0; font-weight: 500; }
.ptab-on { background: #f0f0f0; color: #444; }
.mtools { position: relative; height: 28px; display: flex; align-items: center; border-bottom: 1px solid #ddd; padding-left: 4px; gap: 12px; flex: none; }
.mt { display: flex; align-items: center; gap: 4px; white-space: nowrap; }
.mt-new .arr { margin-left: 2px; }
.more { position: absolute; right: 1px; top: 4px; width: 10px; height: 22px; display: flex; align-items: center; justify-content: center; background: #fff; border: 1px solid #eee; border-radius: 3px; }
.mo { border: 3px solid transparent; border-left: 4px solid #777; border-right: 0; }
.search { height: 20px; display: flex; align-items: center; justify-content: space-between; border-bottom: 1px solid #ddd; padding: 0 6px 0 2px; color: #aaa; flex: none; }
.sic { stroke: #aaa; width: 14px; height: 14px; }
.tree-h { height: 28px; padding: 0 0 0 13px; display: flex; align-items: center; }
.caret { border: 4px solid transparent; border-top: 5px solid #777; border-bottom: 0; margin-right: 3px; }
.tree-i { padding-left: 40px; }
.tree-i span { display: inline-block; width: 38px; height: 21px; padding-left: 4px; line-height: 21px; background: #c5daf2; border-radius: 3px; }

.prop-wrap { display: flex; flex: 1; overflow: hidden; }
table { border-collapse: collapse; table-layout: fixed; }
.prop { width: 369px; flex: none; align-self: flex-start; }
.pc1 { width: 22px; } .pc2 { width: 101px; } .pc3 { width: 246px; }
.prop th, .prop td { height: 21px; padding: 0 3px; border: 1px solid #ddd; font-weight: 400; overflow: hidden; white-space: nowrap; line-height: 18px; text-align: left; }
.prop th { text-align: center; color: #444; }
.prop th.pv { background: #7fb8f5; color: #fff; }
.prop td.pn { background: #f0f0f0; text-align: center; color: #555; padding: 0; }
.prop td.pn-on { background: #7fb8f5; color: #fff; font-weight: 700; }
.blue { color: #2a5fd0; }
.prop td.edit { border: 2px solid #808080; }
.vbar { width: 8px; margin: 14px 0 0 5px; background: #c8c8c8; border-radius: 4px; flex: none; }

.split { flex: none; align-self: flex-start; }
.split-l { width: 5px; height: 230px; position: relative; background: linear-gradient(#f0f0f0 0 130px, #6e7681 130px 230px); }
.split-r { width: 4px; height: 230px; background: linear-gradient(#f0f0f0 0 130px, #6e7681 130px 230px); }
.centercol { width: 1039px; flex: none; display: flex; flex-direction: column; }
.canvas { position: relative; height: 359px; background: #000; flex: none; }
.cad { display: block; font-family: "Noto Sans", sans-serif; }
.rl { stroke: #c0101a; fill: none; }
.gl-line { stroke: #0c6a0c; fill: none; }
.bubble { fill: none; stroke: #0c7a0c; }
.bt text { fill: #fff; font-size: 17px; text-anchor: middle; }
.dimt text { fill: #fff; font-size: 17px; text-anchor: middle; }
.mini { fill: #fff; font-size: 6.500px; }
.ucs-y { fill: #19c01e; font-size: 14px; }
.ucs-x { fill: #ff1a1a; font-size: 15px; }
.vtools { position: absolute; right: 0; top: 0; width: 33px; height: 245px; background: #fff; border-radius: 0 0 3px 3px; display: flex; flex-direction: column; align-items: center; padding-top: 12px; }
.vic { stroke: #555; margin-bottom: 7px; }
.vtarr { margin: -1px 0 7px; border-top-color: #555; }
.vline { width: 27px; margin: 0 0 5px; border: 0; border-top: 1px solid #888; }
.vic:nth-of-type(2) { margin-bottom: 8px; }
.grip { height: 4px; background: #fff; padding-left: 470px; flex: none; }
.grip span { display: block; width: 100px; height: 4px; background: #6e7681; }
.bottom { flex: 1; background: #fff; display: flex; flex-direction: column; overflow: hidden; border-right: 1px solid #ddd; }
.title-b { padding-left: 9px; font-weight: 700; }
.btools { height: 28px; display: flex; align-items: center; gap: 12px; padding-left: 6px; flex: none; border-bottom: 1px solid #ddd; color: #444; }
.off { color: #bbb; }
.gridwrap { flex: 1; display: flex; flex-direction: column; overflow: hidden; }
.grid { width: 1064px; flex: none; }
.k8 { width: 8px; } .k61 { width: 61px; } .k60 { width: 60px; } .k42 { width: 42px; } .k40 { width: 40px; } .k101 { width: 101px; } .k82 { width: 82px; } .k81 { width: 81px; }
.grid th, .grid td { border: 1px solid #dadada; padding: 0 4px; font-weight: 400; white-space: nowrap; overflow: hidden; color: #444; }
.grid th { text-align: center; padding: 0; }
.grid tr { height: 21px; }
.grid tr.h1 { height: 18px; }
.grid tr.h2 { height: 16px; }
.h1 th, .h2 th { line-height: 15px; }
.grid td { line-height: 18px; }
.grid td.pos { white-space: normal; line-height: 17px; }
.grid .gut { background: #f0f0f0; padding: 0; color: #555; }
.gutter { flex: 1; width: 9px; background: #f0f0f0; border-right: 1px solid #dadada; }

.right { width: 129px; flex: none; overflow: hidden; background: #fff; }
.title-r { padding-left: 9px; font-weight: 700; border-bottom: 0; }
.rtabs { height: 29px; background: #f0f0f0; display: flex; gap: 4px; padding: 4px 0 0 3px; border-bottom: 1px solid #ddd; }
.rtab { width: 60px; height: 24px; line-height: 23px; text-align: center; background: #dcdcdc; border-radius: 3px 3px 0 0; color: #666; font-weight: 500; flex: none; }
.rtab-on { background: #fff; color: #2a7ae2; border: 1px solid #ddd; border-bottom: 0; }
.layers { width: 130px; margin-left: 3px; }
.layers tr { height: 21px; }
.layers th, .layers td { border: 1px solid #ddd; padding: 0; font-weight: 400; text-align: left; white-space: nowrap; color: #444; overflow: hidden; line-height: 18px; }
.layers th { width: 122px; position: relative; }
.lh th { text-align: center; }
.t0 { padding-left: 3px !important; }
.t1 { padding-left: 13px !important; }
.t2 { padding-left: 41px !important; }
.bx { display: inline-block; width: 13px; height: 13px; margin-right: 6px; border: 1px solid #888; border-radius: 2px; font-weight: 400; font-size: 11px; line-height: 11px; text-align: center; color: #555; vertical-align: -1px; background: #fff; }
.t2::before { content: ""; position: absolute; left: 19px; width: 17px; top: 50%; height: 1px; background: #ddd; }
.t2::after { content: ""; position: absolute; left: 19px; width: 1px; top: 0; height: 50%; background: #ddd; }

/* hand-drawn annotations over the screenshot */
.marks { position: absolute; left: 0; top: 0; z-index: 9; pointer-events: none; }
.mark-box { fill: none; stroke: #f5221b; stroke-width: 3; }
.mark-arrow { fill: #f5221b; }
```
